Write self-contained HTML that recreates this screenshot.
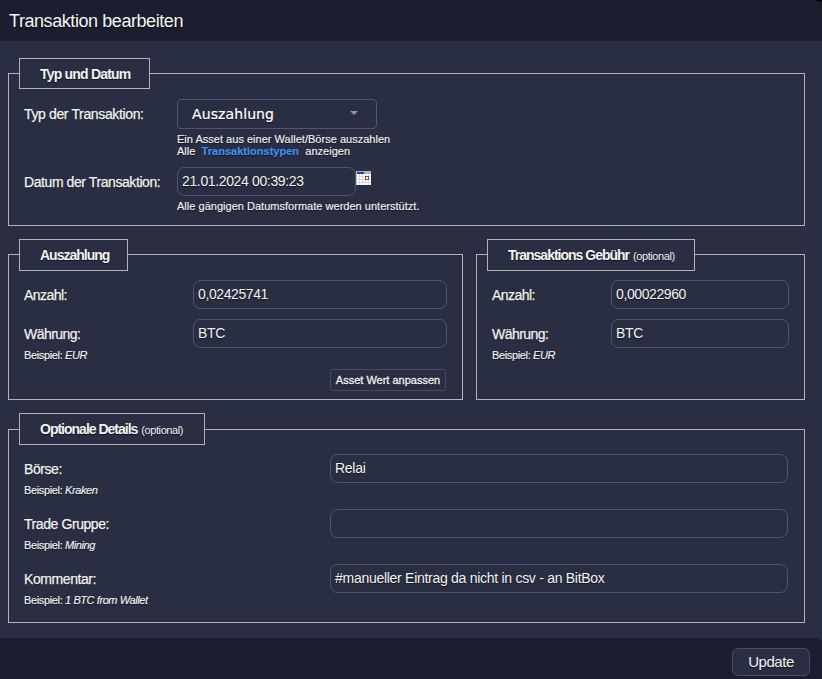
<!DOCTYPE html>
<html lang="de">
<head>
<meta charset="utf-8">
<title>Transaktion bearbeiten</title>
<style>
html,body{margin:0;padding:0;}
body{width:822px;height:679px;overflow:hidden;background:#292e42;position:relative;
 font-family:"Liberation Sans",sans-serif;color:#f2f2f2;font-size:14px;
 text-shadow:0 1px 1px rgba(0,0,0,.55);}
.abs{position:absolute;}
#hdr{left:0;top:0;width:822px;height:41px;background:#1b1e2e;}
#hdr span{position:absolute;left:9px;top:11px;font-size:18px;line-height:21px;letter-spacing:-0.43px;color:#f4f4f4;white-space:nowrap;}
#ftr{left:0;top:638px;width:822px;height:41px;background:#1b1e2e;}
.fs{position:absolute;border:1px solid #b4b4b4;box-sizing:border-box;}
.lg{position:absolute;border:1px solid #b4b4b4;box-sizing:border-box;background:#292e42;
 font-weight:bold;font-size:14px;line-height:30px;white-space:nowrap;text-align:left;padding-left:20px;letter-spacing:-1px;}
.lg small{font-weight:normal;font-size:11px;letter-spacing:-0.4px;margin-left:1px;}
.lb{position:absolute;font-size:14px;line-height:16px;white-space:nowrap;letter-spacing:-0.42px;-webkit-text-stroke:0.25px #f2f2f2;}
.hint{position:absolute;font-size:11px;line-height:13px;white-space:nowrap;letter-spacing:0.02px;-webkit-text-stroke:0.15px #f2f2f2;}
.ex{letter-spacing:-0.36px !important;}
.hint i{letter-spacing:-0.42px;}
.hint b{color:#4090f0;-webkit-text-stroke:0.2px #4090f0;}
.inp{position:absolute;box-sizing:border-box;border:1px solid #4f5575;border-radius:7.5px;background:#292e42;
 font-size:14px;line-height:26px;padding-left:4px;white-space:nowrap;overflow:hidden;letter-spacing:-0.28px;}
.btn{position:absolute;box-sizing:border-box;border:1px solid #4e5272;border-radius:3px;background:#292e42;text-align:center;white-space:nowrap;}
</style>
</head>
<body>
<div id="hdr" class="abs"><span>Transaktion bearbeiten</span></div>

<!-- Typ und Datum -->
<div class="fs" style="left:8px;top:73px;width:797px;height:153px;"></div>
<div class="lg" style="left:19px;top:58px;width:131px;height:31px;letter-spacing:-0.8px;">Typ und Datum</div>
<div class="lb" style="left:24px;top:106px;letter-spacing:-0.36px;">Typ der Transaktion:</div>
<div class="inp" style="left:177px;top:99px;width:200px;height:30px;border-radius:4px;font-family:'DejaVu Sans','Liberation Sans',sans-serif;font-size:14px;line-height:28px;padding-left:14px;letter-spacing:0.1px;color:#fff;-webkit-text-stroke:0.2px #fff;">Auszahlung</div>
<svg class="abs" style="left:350px;top:111px" width="8" height="4" viewBox="0 0 8 4"><path d="M0 0H8L4 4Z" fill="#9c8f9d"/></svg>
<div class="hint" style="left:177px;top:133px;">Ein Asset aus einer Wallet/Börse auszahlen</div>
<div class="hint" style="left:177px;top:145px;">Alle &nbsp;<b>Transaktionstypen</b>&nbsp; anzeigen</div>
<div class="lb" style="left:24px;top:174px;">Datum der Transaktion:</div>
<div class="inp" style="left:177px;top:167px;width:179px;height:29px;letter-spacing:-0.36px;">21.01.2024 00:39:23</div>
<svg class="abs" style="left:356px;top:171px" width="15" height="14" viewBox="0 0 15 14" shape-rendering="crispEdges">
 <rect x="0" y="0" width="15" height="14" fill="#cfdce0"/>
 <rect x="0" y="0" width="15" height="1" fill="#b4b4b4"/>
 <rect x="0" y="1" width="1" height="13" fill="#c4c8c8"/>
 <rect x="1" y="1" width="7" height="2" fill="#1f3f9c"/>
 <rect x="8" y="1" width="7" height="2" fill="#b4b4b4"/>
 <g fill="#fff"><rect x="1" y="3" width="2" height="2"/><rect x="4" y="3" width="2" height="2"/><rect x="7" y="3" width="2" height="2"/><rect x="10" y="3" width="2" height="2"/><rect x="13" y="3" width="2" height="2"/><rect x="1" y="6" width="2" height="2"/><rect x="4" y="6" width="2" height="2"/><rect x="7" y="6" width="2" height="2"/><rect x="10" y="6" width="2" height="2"/><rect x="13" y="6" width="2" height="2"/><rect x="1" y="9" width="2" height="2"/><rect x="4" y="9" width="2" height="2"/><rect x="7" y="9" width="2" height="2"/><rect x="10" y="9" width="2" height="2"/><rect x="13" y="9" width="2" height="2"/><rect x="1" y="12" width="2" height="2"/><rect x="4" y="12" width="2" height="2"/><rect x="7" y="12" width="2" height="2"/><rect x="10" y="12" width="2" height="2"/><rect x="13" y="12" width="2" height="2"/></g>
 <rect x="9.5" y="5.5" width="3" height="3" fill="none" stroke="#8b4a32" stroke-width="1"/>
</svg>
<div class="hint" style="left:177px;top:200px;">Alle gängigen Datumsformate werden unterstützt.</div>

<!-- Auszahlung -->
<div class="fs" style="left:8px;top:254px;width:455px;height:146px;"></div>
<div class="lg" style="left:19px;top:239px;width:109px;height:32px;">Auszahlung</div>
<div class="lb" style="left:24px;top:287px;letter-spacing:-0.55px;">Anzahl:</div>
<div class="inp" style="left:193px;top:280px;width:254px;height:29px;line-height:26px;letter-spacing:-0.4px;">0,02425741</div>
<div class="lb" style="left:24px;top:326px;letter-spacing:-0.55px;">Währung:</div>
<div class="hint ex" style="left:24px;top:349px;">Beispiel: <i>EUR</i></div>
<div class="inp" style="left:193px;top:319px;width:254px;height:29px;line-height:26px;">BTC</div>
<div class="btn" style="left:330px;top:369px;width:116px;height:22px;font-size:11px;line-height:20px;-webkit-text-stroke:0.3px #f2f2f2;border-color:#464a68;">Asset Wert anpassen</div>

<!-- Gebühr -->
<div class="fs" style="left:476px;top:254px;width:329px;height:146px;"></div>
<div class="lg" style="left:487px;top:239px;width:208px;height:32px;">Transaktions Gebühr <small>(optional)</small></div>
<div class="lb" style="left:492px;top:287px;letter-spacing:-0.55px;">Anzahl:</div>
<div class="inp" style="left:611px;top:280px;width:178px;height:29px;line-height:26px;letter-spacing:-0.4px;">0,00022960</div>
<div class="lb" style="left:492px;top:326px;letter-spacing:-0.55px;">Währung:</div>
<div class="hint ex" style="left:492px;top:349px;">Beispiel: <i>EUR</i></div>
<div class="inp" style="left:611px;top:319px;width:178px;height:29px;line-height:26px;">BTC</div>

<!-- Optionale Details -->
<div class="fs" style="left:8px;top:429px;width:797px;height:194px;"></div>
<div class="lg" style="left:19px;top:413px;width:186px;height:32px;">Optionale Details <small>(optional)</small></div>
<div class="lb" style="left:24px;top:461px;">Börse:</div>
<div class="hint ex" style="left:24px;top:484px;">Beispiel: <i>Kraken</i></div>
<div class="inp" style="left:330px;top:454px;width:458px;height:29px;">Relai</div>
<div class="lb" style="left:24px;top:516px;">Trade Gruppe:</div>
<div class="hint ex" style="left:24px;top:539px;">Beispiel: <i>Mining</i></div>
<div class="inp" style="left:330px;top:509px;width:458px;height:29px;"></div>
<div class="lb" style="left:24px;top:571px;">Kommentar:</div>
<div class="hint ex" style="left:24px;top:594px;">Beispiel: <i>1 BTC from Wallet</i></div>
<div class="inp" style="left:330px;top:564px;width:458px;height:29px;">#manueller Eintrag da nicht in csv - an BitBox</div>

<svg class="abs" style="left:814px;top:0" width="8" height="5" viewBox="0 0 8 5" shape-rendering="crispEdges"><rect x="2" y="0" width="6" height="1" fill="#000"/><rect x="5" y="1" width="3" height="1" fill="#05060a"/><rect x="1" y="2" width="1" height="1" fill="#0a0b12"/><rect x="5" y="3" width="1" height="1" fill="#0a0b12"/></svg>
<div id="ftr" class="abs"></div>
<div class="abs" style="left:820px;top:638px;width:2px;height:2px;background:#292e42;"></div>
<div class="btn" style="left:732px;top:648px;width:78px;height:28px;font-size:15px;line-height:26px;border-radius:6px;background:#292e42;border-color:#484c6a;letter-spacing:-0.45px;">Update</div>
</body>
</html>
